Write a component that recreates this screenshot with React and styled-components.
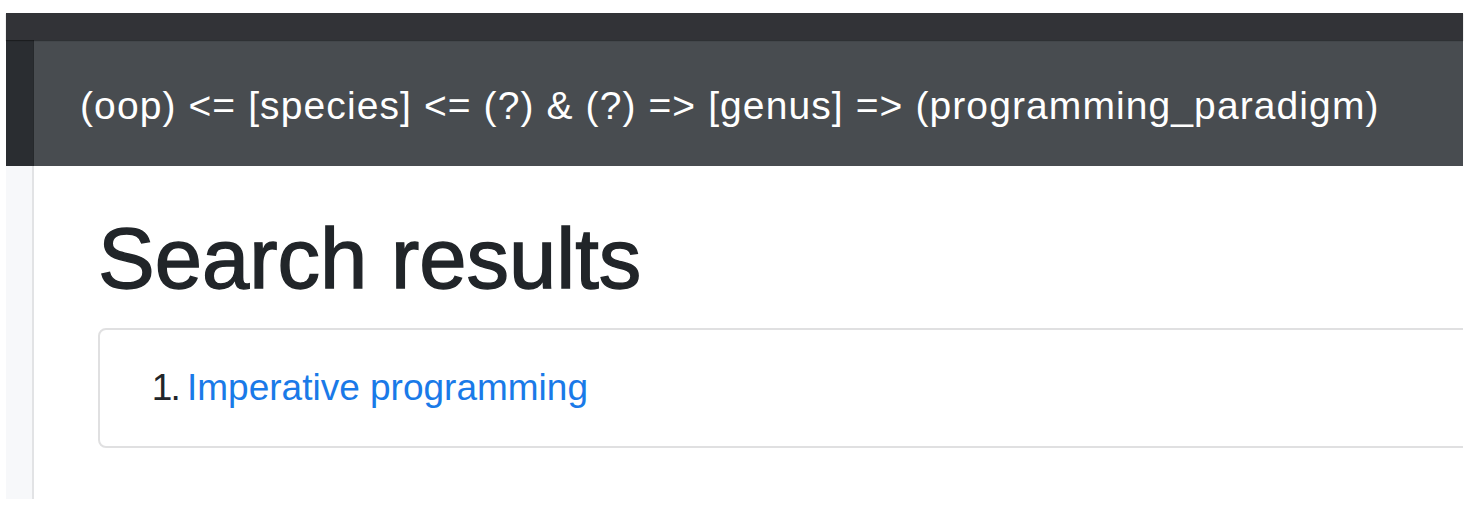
import React from 'react';
import styled, { createGlobalStyle } from 'styled-components';

const GlobalStyle = createGlobalStyle`
  html, body {
    margin: 0;
    padding: 0;
    background: #ffffff;
    font-family: "Liberation Sans", Arial, sans-serif;
  }
`;

const Page = styled.div`
  width: 1480px;
  height: 514px;
  box-sizing: border-box;
  padding: 13px 17px 15px 6px;
  overflow: hidden;
`;

const Window = styled.div`
  display: flex;
  flex-direction: column;
  height: 100%;
`;

const TopBar = styled.div`
  height: 27px;
  background: #323337;
  box-shadow: 0 1px 1px rgba(0, 0, 0, 0.35);
  position: relative;
  z-index: 1;
`;

const Body = styled.div`
  flex: 1;
  display: grid;
  grid-template-columns: 28px 1fr;
  grid-template-rows: 126px 1fr;
  min-height: 0;
`;

const SideTop = styled.div`
  background: #2a2d31;
  border-right: 1px solid #26292c;
`;

const SideBottom = styled.div`
  background: #f7f8fa;
  border-right: 2px solid #e2e3e5;
`;

const Header = styled.header`
  background: #484c50;
  display: flex;
  align-items: center;
  padding: 5px 0 0 46px;
  color: #ffffff;
  font-size: 39px;
  letter-spacing: 1.1px;
  white-space: nowrap;
  overflow: hidden;
`;

const Main = styled.main`
  padding-left: 64px;
  overflow: hidden;
`;

const Title = styled.h1`
  margin: 46px 0 22px;
  font-size: 85px;
  font-weight: 400;
  line-height: 1.1;
  color: #212529;
  -webkit-text-stroke: 1.4px #212529;
`;

const Card = styled.div`
  height: 120px;
  box-sizing: border-box;
  margin-right: -30px;
  border: 2px solid #e0e0e1;
  border-radius: 8px;
  display: flex;
  align-items: center;
`;

const List = styled.ol`
  margin: 0;
  padding-left: 87px;
  font-size: 37px;
  color: #212529;

  li::marker {
    letter-spacing: -2px;
  }
`;

const Link = styled.a`
  color: #1a7ae8;
  text-decoration: none;
`;

export default function App() {
  return (
    <>
      <GlobalStyle />
      <Page>
        <Window>
          <TopBar />
          <Body>
            <SideTop />
            <Header>
              (oop) &lt;= [species] &lt;= (?) &amp; (?) =&gt; [genus] =&gt; (programming_paradigm)
            </Header>
            <SideBottom />
            <Main>
              <Title>Search results</Title>
              <Card>
                <List>
                  <li>
                    <Link href="#">Imperative programming</Link>
                  </li>
                </List>
              </Card>
            </Main>
          </Body>
        </Window>
      </Page>
    </>
  );
}
